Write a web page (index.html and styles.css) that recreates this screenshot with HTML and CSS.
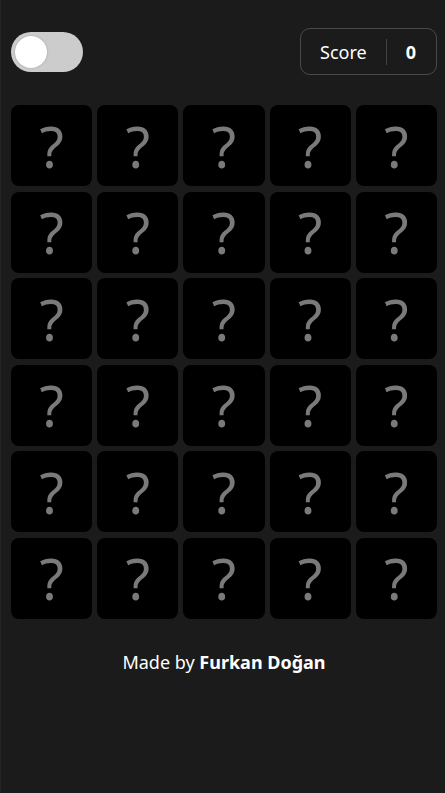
FILE: index.html
```html
<!DOCTYPE html>
<html lang="en">
<head>
    <meta charset="UTF-8">
    <meta name="viewport" content="width=device-width, initial-scale=1.0">
    <title>Memory Game</title>
    <link rel="stylesheet" href="styles.css">
</head>
<body>

    <div class="container">
        <header class="top-bar">
            <label class="switch">
                <input type="checkbox" id="theme-toggle">
                <span class="slider"></span>
            </label>

            <div class="score-box">
                <span class="score-label">Score</span>
                <span class="score-divider"></span>
                <span class="score-value" id="score">0</span>
            </div>
        </header>

        <div class="board" id="board">
            <div class="card">?</div>
            <div class="card">?</div>
            <div class="card">?</div>
            <div class="card">?</div>
            <div class="card">?</div>
            <div class="card">?</div>
            <div class="card">?</div>
            <div class="card">?</div>
            <div class="card">?</div>
            <div class="card">?</div>
            <div class="card">?</div>
            <div class="card">?</div>
            <div class="card">?</div>
            <div class="card">?</div>
            <div class="card">?</div>
            <div class="card">?</div>
            <div class="card">?</div>
            <div class="card">?</div>
            <div class="card">?</div>
            <div class="card">?</div>
            <div class="card">?</div>
            <div class="card">?</div>
            <div class="card">?</div>
            <div class="card">?</div>
            <div class="card">?</div>
            <div class="card">?</div>
            <div class="card">?</div>
            <div class="card">?</div>
            <div class="card">?</div>
            <div class="card">?</div>
        </div>

        <footer class="credits">
            Made by <strong>Furkan Doğan</strong>
        </footer>
    </div>

</body>
</html>
```

FILE: styles.css
```css
/* Page */
body {
    font-family: 'Noto Sans', 'Open Sans', sans-serif;
    background: #1b1b1b;
    color: #ffffff;
    margin: 0;
    border-left: 1px solid #242424;
    min-height: 100vh;
}

.container {
    padding: 28px 8px 0 10px;
}

/* Header with toggle and score */
.top-bar {
    display: flex;
    justify-content: space-between;
    align-items: center;
    height: 47px;
}

.switch {
    position: relative;
    display: inline-block;
    width: 72px;
    height: 40px;
}

.switch input {
    display: none;
}

.slider {
    position: absolute;
    inset: 0;
    background-color: #cccccc;
    border-radius: 20px;
    cursor: pointer;
}

.slider::before {
    content: "";
    position: absolute;
    left: 4px;
    top: 4px;
    width: 32px;
    height: 32px;
    border-radius: 50%;
    background: #ffffff;
    box-shadow: 0 0 2px rgba(0, 0, 0, 0.25);
}

.score-box {
    display: flex;
    align-items: center;
    gap: 19px;
    height: 45px;
    padding: 0 20px 0 19px;
    border: 1px solid #4a4a4a;
    border-radius: 10px;
    font-size: 18px;
}

.score-divider {
    width: 1px;
    height: 26px;
    background: #444444;
}

.score-value {
    font-weight: 700;
}

/* Card grid */
.board {
    display: grid;
    grid-template-columns: repeat(5, 1fr);
    gap: 5.3px 5px;
    margin-top: 30px;
}

.card {
    aspect-ratio: 1;
    background: #000000;
    border-radius: 8px;
    display: flex;
    justify-content: center;
    align-items: center;
    font-size: 56px;
    color: #7a7a7a;
    cursor: pointer;
}

/* Footer */
.credits {
    text-align: center;
    font-size: 18px;
    margin-top: 31px;
}
```
